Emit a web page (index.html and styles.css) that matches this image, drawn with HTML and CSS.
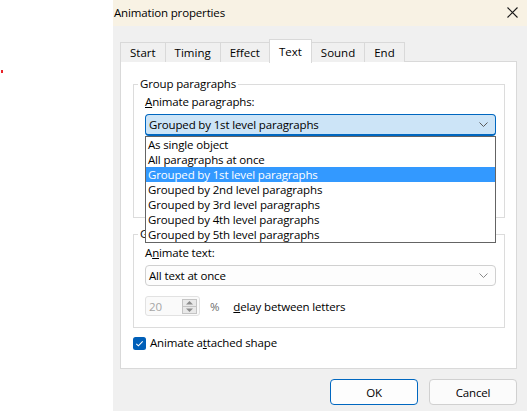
FILE: index.html
```html
<!DOCTYPE html>
<html>
<head>
<meta charset="utf-8">
<link rel="stylesheet" href="styles.css">
</head>
<body>
<div class="screen">
  <div class="desk"><span class="dot"></span></div>
  <div class="dialog">
    <div class="titlebar">
      <span class="title">Animation properties</span>
      <svg class="close" width="11" height="11" viewBox="0 0 11 11"><path d="M0.5 0.5 L10.5 10.5 M10.5 0.5 L0.5 10.5" stroke="#1a1a1a" stroke-width="1.1" fill="none"/></svg>
    </div>
    <div class="dlg-body">
      <div class="tabs">
        <div class="tab">Start</div>
        <div class="tab">Timing</div>
        <div class="tab">Effect</div>
        <div class="tab active">Text</div>
        <div class="tab">Sound</div>
        <div class="tab">End</div>
      </div>
      <div class="panel">
        <div class="group g1">
          <span class="legend">Group paragraphs</span>
          <div class="label"><u>A</u>nimate paragraphs:</div>
          <div class="combo-wrap">
            <div class="combo focused">
              <span>Grouped by 1st level paragraphs</span>
              <svg class="chev" width="9" height="5" viewBox="0 0 9 5"><path d="M0.5 0.5 L4.5 4.5 L8.5 0.5" stroke="#5a5a5a" stroke-width="1" fill="none"/></svg>
            </div>
            <ul class="droplist">
              <li>As single object</li>
              <li>All paragraphs at once</li>
              <li class="sel">Grouped by 1st level paragraphs</li>
              <li>Grouped by 2nd level paragraphs</li>
              <li>Grouped by 3rd level paragraphs</li>
              <li>Grouped by 4th level paragraphs</li>
              <li>Grouped by 5th level paragraphs</li>
            </ul>
          </div>
        </div>
        <div class="group g2">
          <span class="legend">Group text</span>
          <div class="label">A<u>n</u>imate text:</div>
          <div class="combo">
            <span>All text at once</span>
            <svg class="chev" width="9" height="5" viewBox="0 0 9 5"><path d="M0.5 0.5 L4.5 4.5 L8.5 0.5" stroke="#8a8a8a" stroke-width="1" fill="none"/></svg>
          </div>
          <div class="delay-row">
            <div class="spin">
              <span class="spin-val">20</span>
              <svg class="spin-btn" width="15" height="15" viewBox="0 0 15 15">
                <rect x="0.5" y="0.5" width="14" height="14" fill="#e9e9e9" stroke="#c4c4c4"/>
                <line x1="0.5" y1="7.5" x2="14.5" y2="7.5" stroke="#c4c4c4"/>
                <path d="M4 5.5 L7.5 2 L11 5.5 Z" fill="#8c8c8c"/>
                <path d="M4 9.5 L7.5 13 L11 9.5 Z" fill="#8c8c8c"/>
              </svg>
            </div>
            <span class="pct">%</span>
            <span class="delay-label"><u>d</u>elay between letters</span>
          </div>
        </div>
        <div class="check-row">
          <svg class="checkbox" width="13" height="13" viewBox="0 0 13 13"><rect x="0" y="0" width="13" height="13" rx="2.5" fill="#005fb8"/><path d="M3.3 6.8 L5.4 8.8 L9.7 4.4" stroke="#fff" stroke-width="1.1" fill="none"/></svg>
          <span>Animate a<u>t</u>tached shape</span>
        </div>
      </div>
      <div class="buttons">
        <div class="btn default">OK</div>
        <div class="btn">Cancel</div>
      </div>
    </div>
  </div>
</div>
</body>
</html>
```
FILE: styles.css
```css
html, body {
  margin: 0;
  padding: 0;
  background: #ffffff;
}
.screen {
  display: flex;
  width: 527px;
  height: 411px;
  overflow: hidden;
  font-family: "Open Sans", "Noto Sans", sans-serif;
  font-size: 11.5px;
  letter-spacing: -0.15px;
  color: #000;
}
.desk {
  width: 113px;
  flex: none;
  background: #fff;
  padding-top: 70px;
  padding-left: 1px;
  box-sizing: border-box;
}
.dot {
  display: block;
  width: 2px;
  height: 3px;
  background: #e8232a;
}
.dialog {
  flex: 1;
  display: flex;
  flex-direction: column;
  background: #f0f0f0;
}
.titlebar {
  height: 26px;
  flex: none;
  background: #f8f2e4;
  display: flex;
  align-items: center;
  justify-content: space-between;
  padding: 0 9px 1px 1px;
  box-sizing: border-box;
}
.title {
  font-size: 11.5px;
}
.close {
  display: block;
}
.dlg-body {
  flex: 1;
  padding: 13px 10px 0 7px;
  display: flex;
  flex-direction: column;
}
.tabs {
  display: flex;
  align-items: flex-end;
  height: 23px;
  position: relative;
  z-index: 2;
  margin-bottom: -1px;
  letter-spacing: 0;
}
.tab {
  height: 20px;
  line-height: 19px;
  padding: 0 9px;
  border: 1px solid #d9d9d9;
  border-bottom: none;
  margin-left: -1px;
  box-sizing: border-box;
  background: #f0f0f0;
}
.tab:first-child {
  margin-left: 0;
}
.tab.active {
  height: 24px;
  margin-bottom: -1px;
  background: #fff;
  padding-top: 2px;
  line-height: 19px;
  position: relative;
  z-index: 3;
}
.panel {
  height: 308px;
  box-sizing: border-box;
  border: 1px solid #d9d9d9;
  background: #fff;
  padding: 22px 11px 0 12px;
}
.group {
  position: relative;
  border: 1px solid #dcdcdc;
  box-sizing: border-box;
  padding: 9px 8px 0 11px;
}
.g1 {
  height: 134px;
  z-index: 2;
}
.g2 {
  height: 94px;
  margin-top: 16px;
  padding-top: 10px;
  z-index: 1;
}
.legend {
  position: absolute;
  top: -9px;
  left: 4px;
  background: #fff;
  padding: 0 2px;
  line-height: 16px;
}
.label {
  line-height: 16px;
  margin-bottom: 4px;
}
.combo-wrap {
  position: relative;
}
.combo {
  height: 21px;
  box-sizing: border-box;
  border: 1px solid #d0d0d0;
  border-radius: 4px;
  background: #fdfdfd;
  display: flex;
  align-items: center;
  justify-content: space-between;
  padding: 0 7px 0 3px;
}
.combo.focused {
  height: 22px;
  background: #cce4f7;
  border-color: #0067c0;
  border-bottom-width: 2px;
}
.chev {
  display: block;
}
.droplist {
  position: absolute;
  left: 0;
  right: 0;
  top: 100%;
  margin: 0;
  padding: 0;
  list-style: none;
  background: #fff;
  border: 1px solid #646464;
  z-index: 10;
}
.droplist li {
  height: 15px;
  line-height: 15px;
  padding-left: 2px;
  white-space: nowrap;
}
.droplist li.sel {
  background: #3399ff;
  color: #fff;
}
.delay-row {
  display: flex;
  align-items: center;
  margin-top: 10px;
}
.spin {
  width: 55px;
  height: 20px;
  box-sizing: border-box;
  border: 1px solid #e2e2e2;
  border-radius: 3px;
  background: #fafafa;
  display: flex;
  align-items: center;
  justify-content: space-between;
  padding: 0 2px 0 3px;
}
.spin-val {
  color: #a6a6a6;
}
.spin-btn {
  display: block;
}
.pct {
  margin-left: 10px;
  color: #6d6d6d;
}
.delay-label {
  margin-left: 14px;
}
.check-row {
  display: flex;
  align-items: center;
  margin-top: 7px;
  line-height: 16px;
}
.checkbox {
  display: block;
  margin-right: 4px;
}
.buttons {
  display: flex;
  justify-content: flex-end;
  gap: 11px;
  margin-top: 10px;
}
.btn {
  width: 88px;
  height: 26px;
  box-sizing: border-box;
  border: 1px solid #d0d0d0;
  border-radius: 4px;
  background: #fbfbfb;
  display: flex;
  align-items: center;
  justify-content: center;
}
.btn.default {
  border-color: #0067c0;
  background: #fdfdfd;
}
```
